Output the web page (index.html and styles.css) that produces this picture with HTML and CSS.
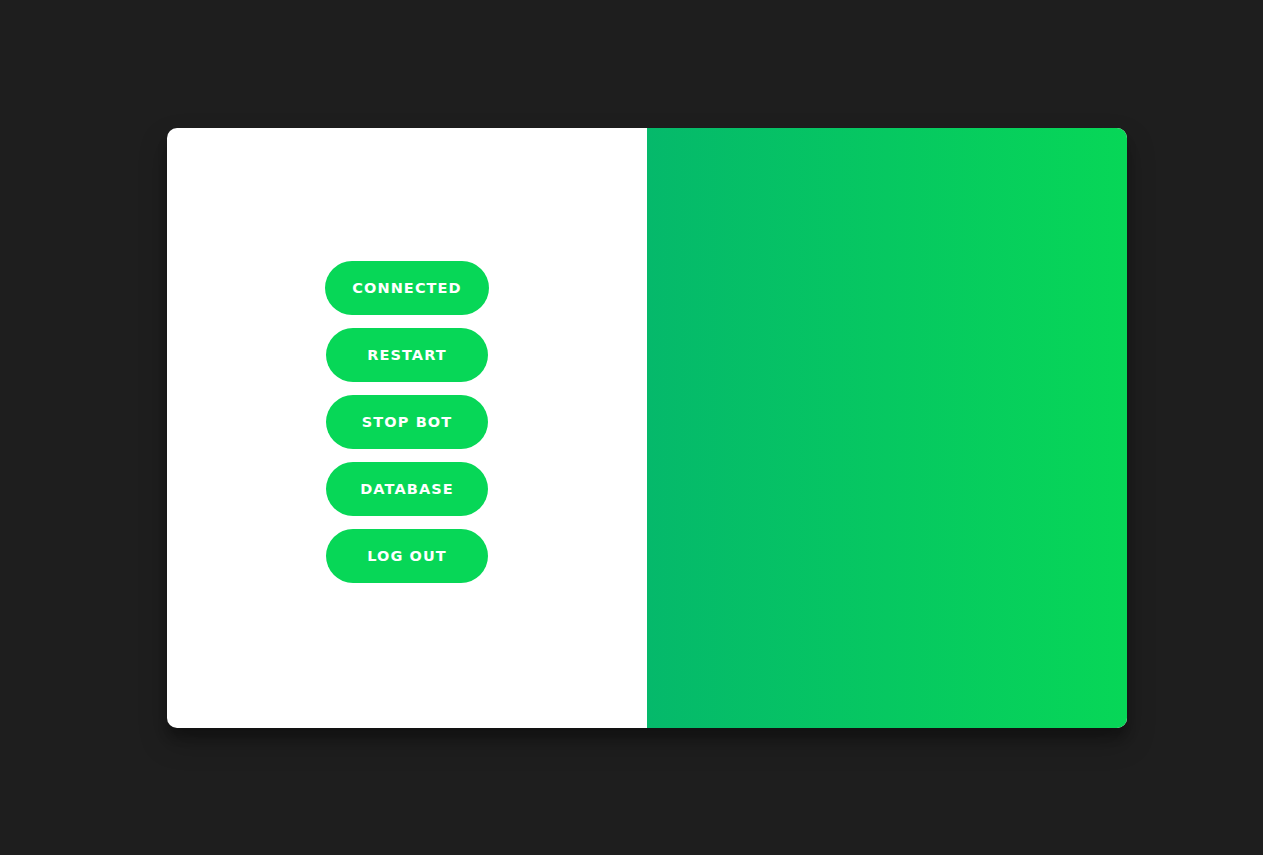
FILE: index.html
```html
<!DOCTYPE html>
<html lang="en">
<head>
<meta charset="utf-8">
<title>Bot Panel</title>
<link rel="stylesheet" href="styles.css">
</head>
<body>
<main class="page">
  <section class="card">
    <div class="panel-left">
      <nav class="menu">
        <button class="btn">Connected</button>
        <button class="btn">Restart</button>
        <button class="btn">Stop Bot</button>
        <button class="btn">Database</button>
        <button class="btn">Log Out</button>
      </nav>
    </div>
    <div class="panel-right"></div>
  </section>
</main>
</body>
</html>
```
FILE: styles.css
```css
html, body {
  margin: 0;
  padding: 0;
  height: 100%;
}
body {
  background: #1e1e1e;
  font-family: "DejaVu Sans", "Liberation Sans", sans-serif;
}
.page {
  height: 855px;
  display: flex;
  justify-content: center;
  padding-top: 128px;
  padding-left: 31px;
  box-sizing: border-box;
}
.card {
  width: 960px;
  height: 600px;
  display: flex;
  border-radius: 10px;
  overflow: hidden;
  background: #fff;
  box-shadow: 0 14px 28px rgba(0,0,0,0.25), 0 10px 10px rgba(0,0,0,0.22);
}
.panel-left {
  width: 480px;
  display: flex;
  justify-content: center;
  align-items: flex-start;
  padding-top: 133px;
  box-sizing: border-box;
}
.panel-right {
  width: 480px;
  background: linear-gradient(to right, #05b96b, #07d757);
}
.menu {
  display: flex;
  flex-direction: column;
  align-items: center;
  gap: 13px;
}
.btn {
  min-width: 162px;
  height: 54px;
  padding: 0 27px;
  border: none;
  border-radius: 27px;
  background: #07d757;
  color: #fff;
  font-family: "DejaVu Sans", "Liberation Sans", sans-serif;
  font-weight: 700;
  font-size: 14.5px;
  letter-spacing: 1.1px;
  text-transform: uppercase;
  cursor: pointer;
}
```
